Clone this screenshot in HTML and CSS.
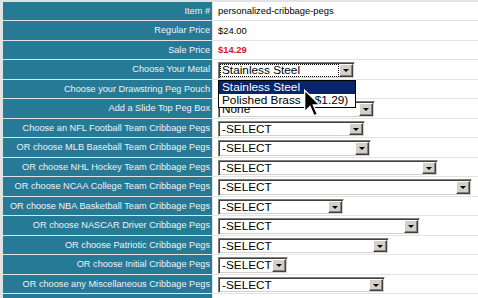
FILE: index.html
```html
<!DOCTYPE html>
<html lang="en">
<head>
  <meta charset="UTF-8">
  <meta name="viewport" content="width=device-width, initial-scale=1">
  <title>Personalized Cribbage Pegs</title>
  <link rel="stylesheet" href="styles.css">
</head>
<body>

  <div class="product">
    <div class="lbl">Item #</div>
    <div class="val">personalized-cribbage-pegs</div>

    <div class="lbl">Regular Price</div>
    <div class="val">$24.00</div>

    <div class="lbl">Sale Price</div>
    <div class="val sale">$14.29</div>

    <div class="lbl">Choose Your Metal</div>
    <div class="val">
      <div class="select open w137">
        <span class="text focus">Stainless Steel</span><span class="btn"></span>
        <div class="list">
          <div class="opt picked">Stainless Steel</div>
          <div class="opt">Polished Brass (+$1.29)</div>
          <svg class="cursor" width="18" height="28" viewBox="0 0 13 21">
            <path d="M1 1 V17 L5 13 L8 20 L10.5 19 L7.5 12 H12.5 Z" fill="#000" stroke="#fff" stroke-width="1" stroke-linejoin="miter"/>
          </svg>
        </div>
      </div>
    </div>

    <div class="lbl">Choose your Drawstring Peg Pouch</div>
    <div class="val"></div>

    <div class="lbl">Add a Slide Top Peg Box</div>
    <div class="val">
      <div class="select w157"><span class="text">None</span><span class="btn"></span></div>
    </div>

    <div class="lbl">Choose an NFL Football Team Cribbage Pegs</div>
    <div class="val">
      <div class="select w147"><span class="text">-SELECT</span><span class="btn"></span></div>
    </div>

    <div class="lbl">OR choose MLB Baseball Team Cribbage Pegs</div>
    <div class="val">
      <div class="select w153"><span class="text">-SELECT</span><span class="btn"></span></div>
    </div>

    <div class="lbl">OR choose NHL Hockey Team Cribbage Pegs</div>
    <div class="val">
      <div class="select w220"><span class="text">-SELECT</span><span class="btn"></span></div>
    </div>

    <div class="lbl">OR choose NCAA College Team Cribbage Pegs</div>
    <div class="val">
      <div class="select w254"><span class="text">-SELECT</span><span class="btn"></span></div>
    </div>

    <div class="lbl">OR choose NBA Basketball Team Cribbage Pegs</div>
    <div class="val">
      <div class="select w126"><span class="text">-SELECT</span><span class="btn"></span></div>
    </div>

    <div class="lbl">OR choose NASCAR Driver Cribbage Pegs</div>
    <div class="val">
      <div class="select w202"><span class="text">-SELECT</span><span class="btn"></span></div>
    </div>

    <div class="lbl">OR choose Patriotic Cribbage Pegs</div>
    <div class="val">
      <div class="select w171"><span class="text">-SELECT</span><span class="btn"></span></div>
    </div>

    <div class="lbl">OR choose Initial Cribbage Pegs</div>
    <div class="val">
      <div class="select w70"><span class="text">-SELECT</span><span class="btn"></span></div>
    </div>

    <div class="lbl">OR choose any Miscellaneous Cribbage Pegs</div>
    <div class="val">
      <div class="select w167"><span class="text">-SELECT</span><span class="btn"></span></div>
    </div>

    <div class="lbl"></div>
    <div class="val"></div>
  </div>

</body>
</html>
```

FILE: styles.css
```css
body {
  margin: 0;
  background: #e2e4e4;
  font-family: "Liberation Sans", Arial, sans-serif;
  overflow: hidden;
}

.product {
  display: grid;
  grid-template-columns: 209px 1fr;
  grid-auto-rows: 18.5px;
  gap: 1px;
  padding: 1.5px 0 0 3px;
  background: #e2e4e4;
}

.lbl {
  background: #277a96;
  color: #eef3f5;
  font-size: 9.2px;
  padding-right: 2px;
  display: flex;
  align-items: center;
  justify-content: flex-end;
  white-space: nowrap;
}

.val {
  background: #fff;
  color: #000;
  font-size: 9.4px;
  padding-left: 5px;
  display: flex;
  align-items: center;
}

.sale {
  color: #d8141e;
  font-weight: bold;
}

/* classic windows style drop-down */
.select {
  position: relative;
  box-sizing: border-box;
  height: 16.5px;
  display: flex;
  padding: 1px;
  background: #fff;
  border: 1px solid;
  border-color: #808080 #fff #fff #808080;
  box-shadow: inset 1px 1px #404040, inset -1px -1px #d4d0c8;
  align-self: flex-end;
}

.select .text {
  flex: 1;
  font-size: 11.8px;
  line-height: 12.5px;
  padding-left: 2px;
  color: #000;
  overflow: hidden;
  white-space: nowrap;
}

.select .focus {
  outline: 1px dotted #000;
  outline-offset: -1px;
}

.select .btn {
  position: relative;
  box-sizing: border-box;
  width: 14px;
  background: #d4d0c8;
  border: 1px solid;
  border-color: #fff #404040 #404040 #fff;
  box-shadow: inset -1px -1px #808080;
}

.select .btn::after {
  content: "";
  position: absolute;
  left: 3px;
  top: 4px;
  border-left: 3.5px solid transparent;
  border-right: 3.5px solid transparent;
  border-top: 3.5px solid #000;
}

.list {
  position: absolute;
  left: -1px;
  top: calc(100% + 2px);
  width: calc(100% + 3px);
  box-sizing: border-box;
  border: 1px solid #000;
  background: #fff;
  z-index: 2;
}

.opt {
  height: 13px;
  line-height: 13px;
  font-size: 11.8px;
  padding-left: 3px;
  white-space: nowrap;
  overflow: hidden;
}

.opt.picked {
  background: #0a246a;
  color: #fff;
}

.cursor {
  position: absolute;
  left: 84px;
  top: 8px;
}

.w70 { width: 70px; }
.w126 { width: 126px; }
.w137 { width: 137px; }
.w147 { width: 147px; }
.w153 { width: 153px; }
.w157 { width: 157px; }
.w167 { width: 167px; }
.w171 { width: 171px; }
.w202 { width: 202px; }
.w220 { width: 220px; }
.w254 { width: 254px; }
```
